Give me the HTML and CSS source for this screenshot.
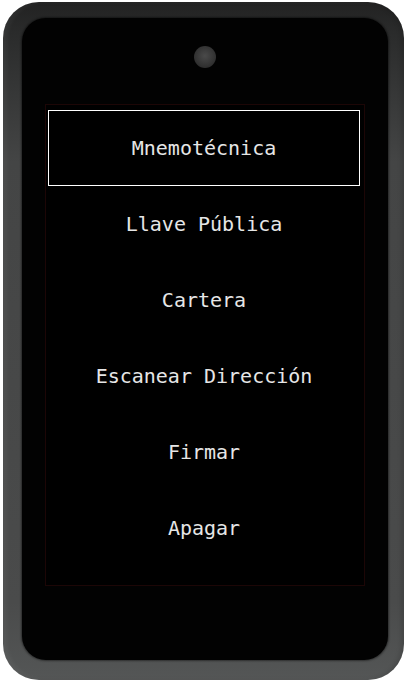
FILE: index.html
```html
<!DOCTYPE html>
<html>
<head>
<meta charset="utf-8">
<link rel="stylesheet" href="styles.css">
</head>
<body>
<div class="device">
  <div class="bezel">
    <div class="camera"></div>
    <div class="screen">
      <ul class="menu">
        <li class="item selected">Mnemotécnica</li>
        <li class="item">Llave Pública</li>
        <li class="item">Cartera</li>
        <li class="item">Escanear Dirección</li>
        <li class="item">Firmar</li>
        <li class="item">Apagar</li>
      </ul>
    </div>
  </div>
</div>
</body>
</html>
```
FILE: styles.css
```css
html, body {
  margin: 0;
  padding: 0;
  background: #ffffff;
}
.device {
  margin: 2px 0 0 3px;
  width: 401px;
  height: 678px;
  box-sizing: border-box;
  padding: 16px 16px 20px 19px;
  border-radius: 36px;
  background: linear-gradient(180deg, #222222 0px, #2a2b2b 30px, #444545 160px, #4a4b4b 600px, #545656 678px);
  box-shadow: inset 4px 0 5px rgba(255,255,255,0.05), inset -3px 0 4px rgba(0,0,0,0.12);
}
.bezel {
  height: 100%;
  background: #020202;
  border-radius: 24px;
  display: flex;
  flex-direction: column;
  align-items: center;
  box-shadow: 0 0 2px 1px rgba(0,0,0,0.45);
}
.camera {
  margin-top: 28px;
  width: 22px;
  height: 22px;
  border-radius: 50%;
  background: radial-gradient(circle at 50% 45%, #4a4a4a 0%, #353535 55%, #222 100%);
  flex: none;
}
.screen {
  margin-top: 36px;
  width: 320px;
  height: 482px;
  box-sizing: border-box;
  border: 1px solid #1c0606;
  background: #000;
}
.menu {
  list-style: none;
  margin: 5px 4px 0 2px;
  padding: 0;
}
.item {
  height: 76px;
  box-sizing: border-box;
  display: flex;
  align-items: center;
  justify-content: center;
  color: #e6e6e6;
  font-family: "DejaVu Sans Mono", monospace;
  font-size: 20px;
}
.item.selected {
  border: 1px solid #ffffff;
}
```
